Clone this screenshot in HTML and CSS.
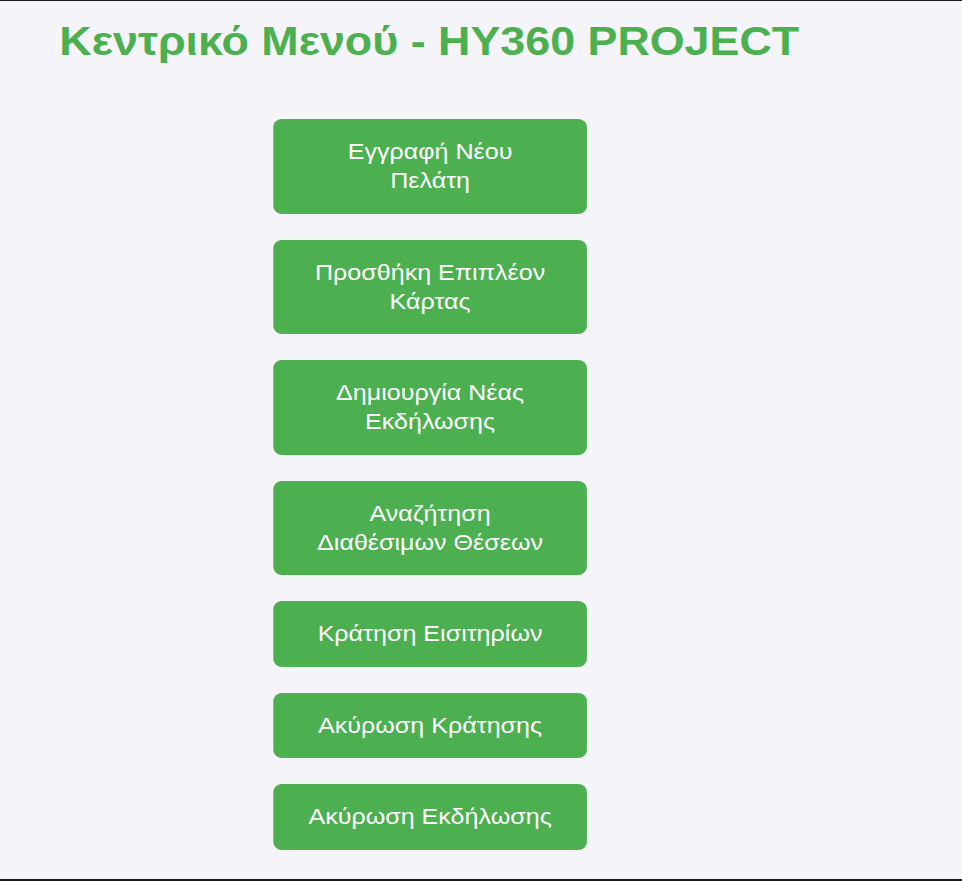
FILE: index.html
```html
<!DOCTYPE html>
<html lang="el">
<head>
<meta charset="utf-8">
<title>Κεντρικό Μενού - HY360 PROJECT</title>
<link rel="stylesheet" href="styles.css">
</head>
<body>
<div class="frame">
  <div class="page">
    <h1 class="title">Κεντρικό Μενού - HY360 PROJECT</h1>
    <nav class="menu">
      <button class="menu-btn">Εγγραφή Νέου Πελάτη</button>
      <button class="menu-btn">Προσθήκη Επιπλέον Κάρτας</button>
      <button class="menu-btn">Δημιουργία Νέας Εκδήλωσης</button>
      <button class="menu-btn">Αναζήτηση Διαθέσιμων Θέσεων</button>
      <button class="menu-btn">Κράτηση Εισιτηρίων</button>
      <button class="menu-btn">Ακύρωση Κράτησης</button>
      <button class="menu-btn">Ακύρωση Εκδήλωσης</button>
    </nav>
  </div>
</div>
</body>
</html>
```

FILE: styles.css
```css
html, body {
  margin: 0;
  padding: 0;
}
body {
  background: #f4f4f9;
  font-family: "Liberation Sans", Arial, sans-serif;
  overflow: hidden;
}
.frame {
  box-sizing: border-box;
  height: 881px;
  border-top: 1px solid #1a1a1a;
  border-bottom: 2px solid #1a1a1a;
  overflow: hidden;
}
/* the captured page is rendered ~12% wider than its layout width */
.page {
  width: 859px;
  transform: scaleX(1.12);
  transform-origin: 0 0;
}
.title {
  margin: 17px 0 0 53px;
  font-size: 40px;
  font-weight: bold;
  color: #4caf50;
  line-height: 46px;
}
.menu {
  display: flex;
  flex-direction: column;
  align-items: flex-start;
  gap: 26px;
  margin: 55px 0 0 244px;
}
.menu-btn {
  width: 280px;
  box-sizing: border-box;
  padding: 18.25px 30px;
  border: none;
  border-radius: 8px;
  background: #4caf50;
  color: #ffffff;
  font-family: "Liberation Sans", Arial, sans-serif;
  font-size: 22.4px;
  line-height: 29px;
  text-align: center;
  cursor: pointer;
}
```
